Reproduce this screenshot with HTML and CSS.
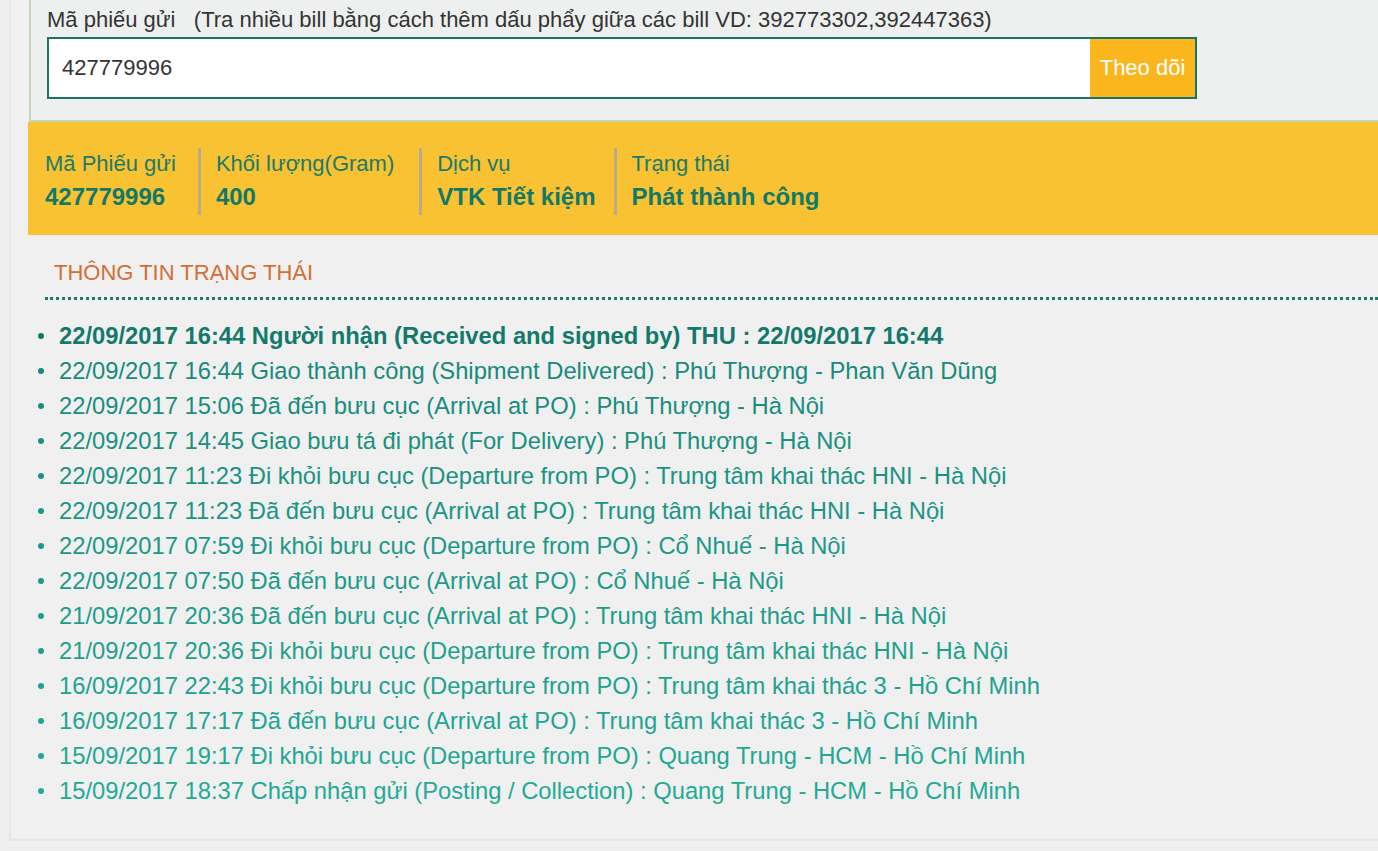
FILE: index.html
```html
<!DOCTYPE html>
<html lang="vi">
<head>
<meta charset="utf-8">
<title>Tra cứu vận đơn</title>
<link rel="stylesheet" href="styles.css">
</head>
<body>
<div class="panel">
  <div class="search">
    <div class="search-label">Mã phiếu gửi&nbsp;&nbsp;&nbsp;(Tra nhiều bill bằng cách thêm dấu phẩy giữa các bill VD: 392773302,392447363)</div>
    <div class="search-box">
      <div class="search-input">427779996</div>
      <div class="search-btn">Theo dõi</div>
    </div>
  </div>
  <div class="summary">
    <div class="col first">
      <div class="col-label">Mã Phiếu gửi</div>
      <div class="col-value">427779996</div>
    </div>
    <div class="col">
      <div class="col-label">Khối lượng(Gram)</div>
      <div class="col-value">400</div>
    </div>
    <div class="col narrow">
      <div class="col-label">Dịch vụ</div>
      <div class="col-value">VTK Tiết kiệm</div>
    </div>
    <div class="col">
      <div class="col-label">Trạng thái</div>
      <div class="col-value">Phát thành công</div>
    </div>
  </div>
  <div class="status">
    <div class="status-title">THÔNG TIN TRẠNG THÁI</div>
    <ul class="events">
      <li class="ev ev1">22/09/2017 16:44 Người nhận (Received and signed by) THU : 22/09/2017 16:44</li>
      <li class="ev ev2">22/09/2017 16:44 Giao thành công (Shipment Delivered) : Phú Thượng - Phan Văn Dũng</li>
      <li class="ev ev3">22/09/2017 15:06 Đã đến bưu cục (Arrival at PO) : Phú Thượng - Hà Nội</li>
      <li class="ev ev4">22/09/2017 14:45 Giao bưu tá đi phát (For Delivery) : Phú Thượng - Hà Nội</li>
      <li class="ev ev5">22/09/2017 11:23 Đi khỏi bưu cục (Departure from PO) : Trung tâm khai thác HNI - Hà Nội</li>
      <li class="ev ev6">22/09/2017 11:23 Đã đến bưu cục (Arrival at PO) : Trung tâm khai thác HNI - Hà Nội</li>
      <li class="ev ev7">22/09/2017 07:59 Đi khỏi bưu cục (Departure from PO) : Cổ Nhuế - Hà Nội</li>
      <li class="ev ev8">22/09/2017 07:50 Đã đến bưu cục (Arrival at PO) : Cổ Nhuế - Hà Nội</li>
      <li class="ev ev9">21/09/2017 20:36 Đã đến bưu cục (Arrival at PO) : Trung tâm khai thác HNI - Hà Nội</li>
      <li class="ev ev10">21/09/2017 20:36 Đi khỏi bưu cục (Departure from PO) : Trung tâm khai thác HNI - Hà Nội</li>
      <li class="ev ev11">16/09/2017 22:43 Đi khỏi bưu cục (Departure from PO) : Trung tâm khai thác 3 - Hồ Chí Minh</li>
      <li class="ev ev12">16/09/2017 17:17 Đã đến bưu cục (Arrival at PO) : Trung tâm khai thác 3 - Hồ Chí Minh</li>
      <li class="ev ev13">15/09/2017 19:17 Đi khỏi bưu cục (Departure from PO) : Quang Trung - HCM - Hồ Chí Minh</li>
      <li class="ev ev14">15/09/2017 18:37 Chấp nhận gửi (Posting / Collection) : Quang Trung - HCM - Hồ Chí Minh</li>
    </ul>
  </div>
</div>
</body>
</html>
```
FILE: styles.css
```css
html, body {
  margin: 0;
  padding: 0;
}
body {
  background: #efefef;
  font-family: "Liberation Sans", Arial, sans-serif;
  height: 851px;
  overflow: hidden;
}
.panel {
  margin-left: 9px;
  height: 841px;
  box-sizing: border-box;
  border-left: 2px solid #e6e6e6;
  border-bottom: 2px solid #e6e6e6;
  background: #f0f0f0;
  padding-left: 17px;
}
.search {
  margin-left: 1px;
  height: 122px;
  box-sizing: border-box;
  border-left: 2px solid #c3d5b4;
  border-bottom: 2px solid #c3d5b4;
  background: #eef0f0;
  padding: 8px 0 0 16px;
}
.search-label {
  font-size: 22px;
  color: #333;
  line-height: 24px;
  height: 29px;
  white-space: nowrap;
}
.search-box {
  display: flex;
  width: 1150px;
  height: 62px;
  box-sizing: border-box;
  border: 2px solid #1c7468;
  background: #fff;
}
.search-input {
  flex: 1;
  font-size: 22px;
  color: #333;
  line-height: 58px;
  padding-left: 13px;
}
.search-btn {
  width: 105px;
  background: #fbb61e;
  color: #fff;
  font-size: 22px;
  line-height: 58px;
  text-align: center;
}
.summary {
  height: 113px;
  box-sizing: border-box;
  background: #f8c232;
  display: flex;
  align-items: flex-start;
  padding: 26px 0 0 17px;
}
.col {
  border-left: 3px solid #b9ac8b;
  padding: 1px 25px 0 15px;
  height: 67px;
  box-sizing: border-box;
}
.col.first {
  border-left: none;
  padding-left: 0;
  padding-right: 22px;
}
.col.narrow {
  padding-right: 18px;
}
.col-label {
  font-size: 22px;
  color: #1e7a67;
  line-height: 30px;
}
.col-value {
  font-size: 24px;
  font-weight: bold;
  color: #137866;
  line-height: 36px;
}
.status {
  padding: 24px 0 0 17px;
}
.status-title {
  font-size: 22px;
  color: #d36f35;
  padding-left: 9px;
  line-height: 28px;
  height: 38px;
  border-bottom: 3px dotted #1b7b6f;
}
.events {
  margin: 18px 0 0;
  padding: 0 0 0 14px;
  list-style: none;
}
.ev {
  position: relative;
  font-size: 23.75px;
  line-height: 35px;
  color: #1a8e7f;
  white-space: nowrap;
}
.ev::before {
  content: "";
  position: absolute;
  left: -21px;
  top: 15px;
  width: 6px;
  height: 6px;
  border-radius: 50%;
  background: currentColor;
}
.ev1 { font-weight: bold; color: #137a6b; }
.ev2 { color: #178a7b; }
.ev3 { color: #188d7e; }
.ev4 { color: #199080; }
.ev5 { color: #1a9383; }
.ev6 { color: #1b9585; }
.ev7 { color: #1c9887; }
.ev8 { color: #1d9a89; }
.ev9 { color: #1e9d8b; }
.ev10 { color: #1fa08d; }
.ev11 { color: #20a28f; }
.ev12 { color: #21a592; }
.ev13 { color: #22a794; }
.ev14 { color: #23aa97; }
```
